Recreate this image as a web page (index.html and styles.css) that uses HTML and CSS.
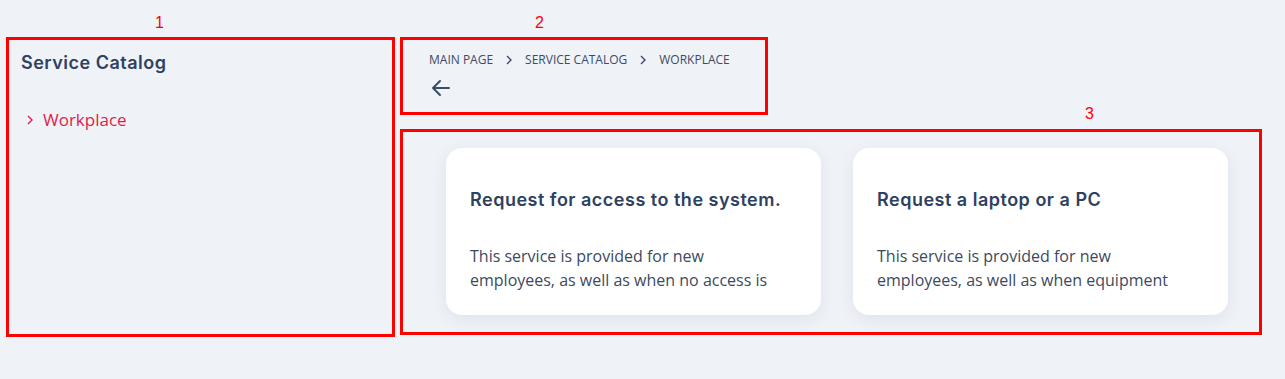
FILE: index.html
```html
<!DOCTYPE html>
<html lang="en">
<head>
  <meta charset="UTF-8">
  <meta name="viewport" content="width=device-width, initial-scale=1">
  <title>Service Catalog</title>
  <link rel="stylesheet" href="styles.css">
</head>
<body>
  <div class="page">
    <!-- Left tree of catalog sections -->
    <aside class="sidebar annotated">
      <span class="mark mark-1">1</span>
      <h2 class="sidebar-title">Service Catalog</h2>
      <ul class="tree">
        <li class="tree-item active">
          <svg class="tree-chevron" viewBox="0 0 6 10" width="6" height="10"><polyline points="1,1 5,5 1,9" fill="none" stroke="currentColor" stroke-width="1.4"/></svg>
          <span>Workplace</span>
        </li>
      </ul>
    </aside>

    <main class="main">
      <!-- Breadcrumb and back button -->
      <div class="crumbs-box annotated">
        <span class="mark mark-2">2</span>
        <nav class="breadcrumb">
          <a class="crumb">Main page</a>
          <svg class="crumb-sep" viewBox="0 0 6 10" width="6" height="10"><polyline points="1,1 5,5 1,9" fill="none" stroke="currentColor" stroke-width="1.4"/></svg>
          <a class="crumb">Service catalog</a>
          <svg class="crumb-sep" viewBox="0 0 6 10" width="6" height="10"><polyline points="1,1 5,5 1,9" fill="none" stroke="currentColor" stroke-width="1.4"/></svg>
          <span class="crumb">Workplace</span>
        </nav>
        <button class="back" type="button">
          <svg viewBox="0 0 24 24" width="24" height="24"><path d="M20 12H4M11 5l-7 7 7 7" fill="none" stroke="currentColor" stroke-width="2" stroke-linecap="round" stroke-linejoin="round"/></svg>
        </button>
      </div>

      <!-- Service cards -->
      <section class="catalog annotated">
        <span class="mark mark-3">3</span>
        <div class="card">
          <h3 class="card-title">Request for access to the system.</h3>
          <p class="card-text">This service is provided for new employees, as well as when no access is</p>
        </div>
        <div class="card">
          <h3 class="card-title">Request a laptop or a PC</h3>
          <p class="card-text">This service is provided for new employees, as well as when equipment</p>
        </div>
      </section>
    </main>
  </div>
</body>
</html>
```

FILE: styles.css
```css
/* Reset and base styles */
* {
  margin: 0;
  padding: 0;
  box-sizing: border-box;
}
body {
  background: #eff2f7;
  font-family: 'Open Sans', sans-serif;
  color: #3d4a5e;
}
.page {
  display: flex;
  align-items: flex-start;
  gap: 5px;
  padding: 37px 0 0 6px;
}
/* Red annotation frames and numbers */
.annotated {
  position: relative;
  border: 3px solid #ff0000;
}
.mark {
  position: absolute;
  top: -26px;
  font-family: 'Liberation Sans', Arial, sans-serif;
  font-size: 16px;
  line-height: 18px;
  color: #ff0000;
}
.mark-1 { left: 146px; }
.mark-2 { left: 132px; }
.mark-3 { left: 682px; top: -27px; }
/* Sidebar */
.sidebar {
  width: 389px;
  height: 300px;
  padding: 11px 12px;
}
.sidebar-title {
  font-family: 'Inter', sans-serif;
  font-weight: 600;
  font-size: 18px;
  letter-spacing: 0.5px;
  line-height: 24px;
  color: #2e4161;
}
.tree {
  list-style: none;
  margin-top: 33px;
}
.tree-item {
  display: flex;
  align-items: center;
  gap: 10px;
  padding-left: 6px;
  font-size: 17px;
  line-height: 24px;
  font-weight: 500;
}
.tree-item.active {
  color: #e31b4b;
}
/* Breadcrumb */
.main {
  display: flex;
  flex-direction: column;
  gap: 14px;
}
.crumbs-box {
  width: 368px;
  height: 78px;
  padding: 12px 26px;
}
.breadcrumb {
  display: flex;
  align-items: center;
  gap: 13px;
  font-size: 12px;
  line-height: 16px;
  text-transform: uppercase;
  color: #3d4a66;
}
.crumb-sep {
  color: #3d4a66;
}
.back {
  display: block;
  margin: 8px 0 0 0;
  border: none;
  background: none;
  color: #3b4c6b;
  cursor: pointer;
}
.back svg {
  display: block;
}
/* Service cards */
.catalog {
  width: 862px;
  height: 206px;
  display: flex;
  gap: 32px;
  padding: 16px 0 0 43px;
}
.card {
  width: 375px;
  height: 167px;
  background: #fff;
  border-radius: 16px;
  padding: 40px 24px 0;
  box-shadow: 0 4px 16px rgba(40, 60, 100, 0.08);
}
.card-title {
  font-family: 'Inter', sans-serif;
  font-weight: 600;
  font-size: 18px;
  letter-spacing: 0.5px;
  line-height: 24px;
  color: #2e4161;
}
.card-text {
  max-width: 310px;
  margin-top: 32px;
  font-size: 16px;
  line-height: 24px;
  color: #3d4a5e;
}
```
